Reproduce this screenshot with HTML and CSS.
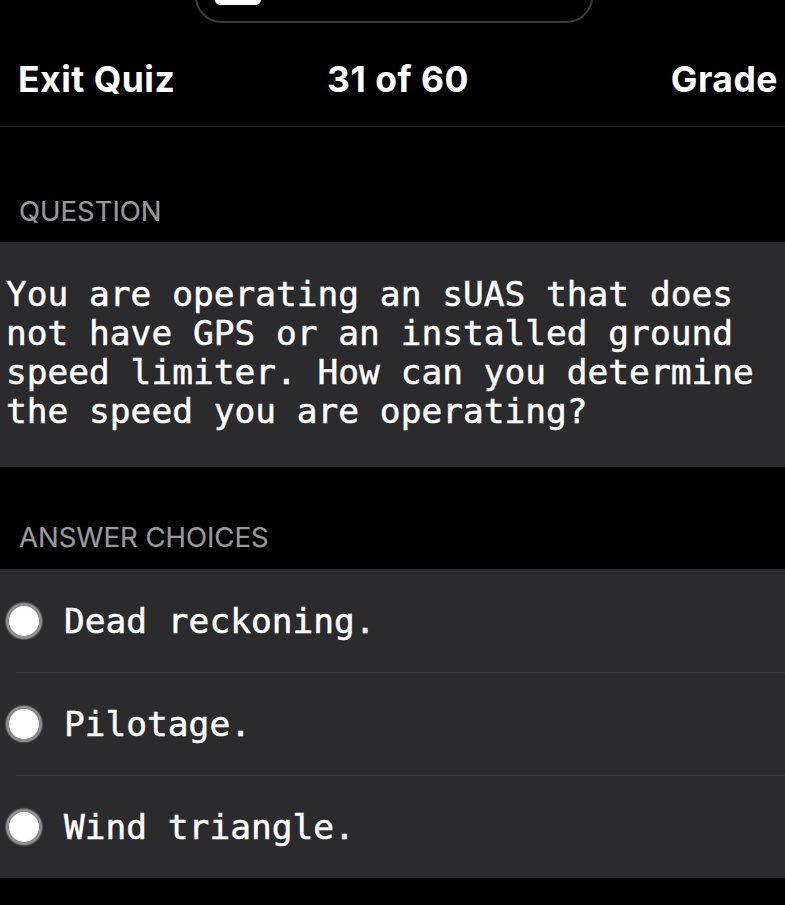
FILE: index.html
```html
<!DOCTYPE html>
<html lang="en">
<head>
<meta charset="utf-8">
<title>Quiz</title>
<link rel="stylesheet" href="styles.css">
</head>
<body>
  <div class="island">
    <div class="island-pill"></div>
  </div>

  <header class="quiz-bar">
    <span class="bar-left">Exit Quiz</span>
    <span class="bar-mid">31 of 60</span>
    <span class="bar-right">Grade</span>
  </header>

  <div class="section-label label-question">QUESTION</div>
  <div class="question">You are operating an sUAS that does not have GPS or an installed ground speed limiter. How can you determine the speed you are operating?</div>

  <div class="section-label label-answers">ANSWER CHOICES</div>
  <ul class="choices">
    <li class="choice"><span class="radio"></span><span class="choice-text">Dead reckoning.</span></li>
    <li class="choice"><span class="radio"></span><span class="choice-text">Pilotage.</span></li>
    <li class="choice"><span class="radio"></span><span class="choice-text">Wind triangle.</span></li>
  </ul>
</body>
</html>
```

FILE: styles.css
```css
html, body {
  margin: 0;
  padding: 0;
  background: #000;
  color: #fff;
  width: 785px;
  height: 905px;
  overflow: hidden;
}

body {
  font-family: Inter, "Noto Sans", sans-serif;
}

/* rounded housing peeking in at the top edge */
.island {
  width: 398px;
  height: 53px;
  margin: -30px 0 0 195px;
  border: 2.5px solid #3b3b3d;
  border-radius: 34px;
  box-sizing: border-box;
  position: relative;
}

.island-pill {
  position: absolute;
  left: 18px;
  top: 27px;
  width: 46px;
  height: 6px;
  background: #fff;
  border-radius: 0 0 5px 5px;
}

.quiz-bar {
  display: grid;
  grid-template-columns: 1fr auto 1fr;
  align-items: baseline;
  padding: 36px 7px 25px 18px;
  border-bottom: 1px solid #1f1f21;
  font-size: 35.5px;
  line-height: 42px;
  font-weight: 700;
  letter-spacing: 0.5px;
}

.bar-right {
  justify-self: end;
}

.section-label {
  color: #98989e;
  font-size: 27.5px;
  line-height: 33px;
  padding-left: 19px;
  -webkit-text-stroke: 0.2px #98989e;
}

.label-question {
  padding-top: 68px;
  padding-bottom: 14px;
}

.label-answers {
  padding-top: 54px;
  padding-bottom: 15px;
}

.question {
  background: #2b2b2d;
  font-family: "DejaVu Sans Mono", "Liberation Mono", monospace;
  font-size: 34.5px;
  line-height: 39px;
  padding: 33px 20px 36px 6px;
  -webkit-text-stroke: 0.5px #fff;
}

.choices {
  list-style: none;
  margin: 0;
  padding: 0;
  background: #2b2b2d;
}

.choice {
  display: flex;
  align-items: center;
  height: 103px;
  padding-left: 6px;
  position: relative;
}

.choice + .choice::before {
  content: "";
  position: absolute;
  left: 16px;
  right: 0;
  top: 0;
  height: 1px;
  background: #38383a;
}

.radio {
  width: 30px;
  height: 30px;
  border-radius: 50%;
  background: #fff;
  border: 3px solid #8e8e92;
  box-shadow: 0 0 1px 1px rgba(140, 140, 144, 0.5);
  flex-shrink: 0;
  margin-right: 22px;
}

.choice-text {
  font-family: "DejaVu Sans Mono", "Liberation Mono", monospace;
  font-size: 34.5px;
  line-height: 39px;
  padding-top: 2px;
  -webkit-text-stroke: 0.5px #fff;
}
```
